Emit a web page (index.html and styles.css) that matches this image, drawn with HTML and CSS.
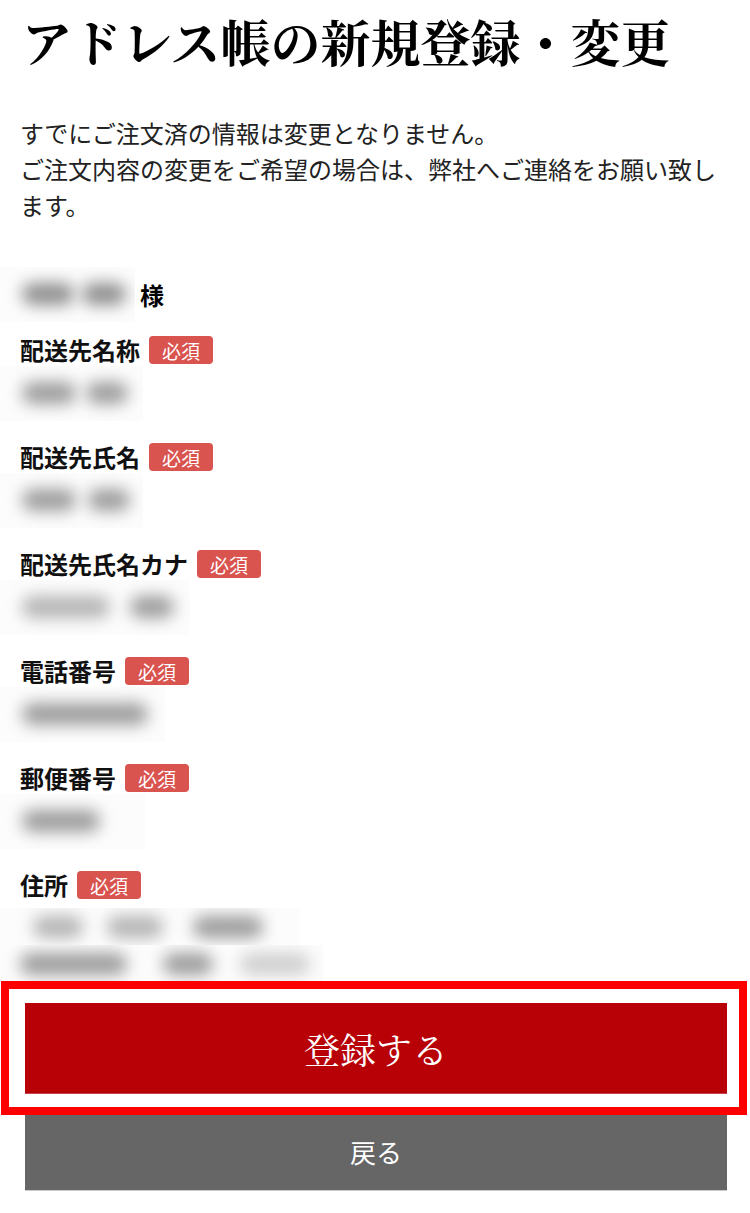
FILE: index.html
```html
<!DOCTYPE html>
<html lang="ja">
<head>
<meta charset="utf-8">
<title>アドレス帳の新規登録・変更</title>
<link rel="stylesheet" href="styles.css">
</head>
<body>
<div class="page">
  <h1 class="title">アドレス帳の新規登録・変更</h1>
  <p class="notice">すでにご注文済の情報は変更となりません。<br>ご注文内容の変更をご希望の場合は、弊社へご連絡をお願い致します。</p>

  <div class="customer">
    <div class="masked w135">
      <span class="blob dark" style="left:22px;width:52px"></span>
      <span class="blob dark" style="left:82px;width:44px"></span>
    </div>
    <span class="sama">様</span>
  </div>

  <div class="fields">
    <div class="field">
      <div class="label">配送先名称<span class="badge">必須</span></div>
      <div class="value"><div class="masked w143">
        <span class="blob" style="left:22px;width:54px"></span>
        <span class="blob" style="left:86px;width:42px"></span>
      </div></div>
    </div>
    <div class="field">
      <div class="label">配送先氏名<span class="badge">必須</span></div>
      <div class="value"><div class="masked w143">
        <span class="blob" style="left:22px;width:54px"></span>
        <span class="blob" style="left:88px;width:42px"></span>
      </div></div>
    </div>
    <div class="field">
      <div class="label">配送先氏名カナ<span class="badge">必須</span></div>
      <div class="value"><div class="masked w190">
        <span class="blob light" style="left:22px;width:88px"></span>
        <span class="blob" style="left:130px;width:44px"></span>
      </div></div>
    </div>
    <div class="field">
      <div class="label">電話番号<span class="badge">必須</span></div>
      <div class="value"><div class="masked w165">
        <span class="blob" style="left:22px;width:126px"></span>
      </div></div>
    </div>
    <div class="field">
      <div class="label">郵便番号<span class="badge">必須</span></div>
      <div class="value"><div class="masked w145">
        <span class="blob" style="left:22px;width:78px"></span>
      </div></div>
    </div>
    <div class="field last">
      <div class="label">住所<span class="badge">必須</span></div>
      <div class="value address">
        <div class="masked w300 line">
          <span class="blob light" style="left:33px;width:50px"></span>
          <span class="blob light" style="left:107px;width:56px"></span>
          <span class="blob" style="left:193px;width:70px"></span>
        </div>
        <div class="masked w323 line">
          <span class="blob" style="left:20px;width:107px"></span>
          <span class="blob" style="left:163px;width:50px"></span>
          <span class="blob faint" style="left:240px;width:70px"></span>
        </div>
      </div>
    </div>
  </div>

  <div class="actions">
    <div class="submit-wrap">
      <button class="btn btn-submit" type="button">登録する</button>
      <span class="highlight"></span>
    </div>
    <button class="btn btn-back" type="button">戻る</button>
  </div>
</div>
</body>
</html>
```

FILE: styles.css
```css
html, body {
  margin: 0;
  padding: 0;
  background: #ffffff;
}

body {
  font-family: "Noto Sans CJK JP", "Noto Sans", sans-serif;
  color: #111;
}

.page {
  padding: 0 20px 0 20px;
}

.title {
  margin: 0;
  padding-top: 15px;
  padding-left: 2px;
  font-family: "Noto Serif CJK JP", "Noto Sans CJK JP", serif;
  font-size: 50px;
  line-height: 50px;
  font-weight: 700;
  color: #000;
  white-space: nowrap;
}

.notice {
  margin: 50px 0 0 0;
  font-size: 24px;
  line-height: 36px;
  color: #222;
}

.customer {
  margin-top: 44px;
  margin-left: -20px;
  height: 55px;
  display: flex;
  align-items: center;
}

.sama {
  margin-left: 5px;
  font-size: 24px;
  font-weight: 700;
  color: #000;
}

.masked {
  position: relative;
  height: 55px;
  background: #fcfcfc;
  overflow: hidden;
  flex: none;
}

.w135 { width: 135px; }
.w143 { width: 143px; }
.w145 { width: 145px; }
.w165 { width: 165px; }
.w190 { width: 190px; }
.w300 { width: 300px; }
.w323 { width: 323px; }

.blob {
  position: absolute;
  top: 16px;
  height: 22px;
  border-radius: 11px;
  background: #9c9c9c;
  filter: blur(8px);
}

.blob.dark { background: #8e8e8e; }
.blob.light { background: #b4b4b4; }
.blob.faint { background: #cfcfcf; }

.fields {
  margin-top: 14px;
}

.field {
  height: 86px;
  margin-bottom: 21px;
}

.field.last {
  height: auto;
  margin-bottom: 0;
}

.label {
  height: 28px;
  display: flex;
  align-items: center;
  font-size: 24px;
  font-weight: 700;
  color: #111;
  line-height: 28px;
}

.badge {
  margin-left: 9px;
  height: 28px;
  padding: 0 13px;
  box-sizing: border-box;
  display: inline-flex;
  align-items: center;
  background: #d9534f;
  border-radius: 4px;
  color: #fff;
  font-size: 19px;
  font-weight: 400;
  line-height: 1;
}

.value {
  height: 58px;
  margin-left: -20px;
  padding-top: 2px;
  box-sizing: border-box;
}

.value.address {
  height: auto;
  padding-top: 9px;
  display: flex;
  flex-direction: column;
}

.masked.line {
  height: 37px;
}

.masked.line .blob {
  top: 8px;
}

.actions {
  margin-top: 21px;
  margin-left: 5px;
  margin-right: 3px;
  display: flex;
  flex-direction: column;
}

.submit-wrap {
  position: relative;
}

.btn {
  display: block;
  width: 100%;
  border: none;
  margin: 0;
  padding: 0;
  color: #fff;
  cursor: pointer;
}

.btn-submit {
  height: 91px;
  background: #b80007;
  border-bottom: 1px solid #c8404a;
  font-family: "Noto Serif CJK JP", "Liberation Serif", "Noto Sans CJK JP", serif;
  font-size: 36px;
  font-weight: 400;
  letter-spacing: 0;
}

.btn-back {
  margin-top: 19px;
  height: 78px;
  background: #666666;
  border-bottom: 1px solid #c9c9c9;
  font-family: "Noto Sans CJK JP", sans-serif;
  font-size: 26px;
  font-weight: 400;
}

.highlight {
  position: absolute;
  left: -24px;
  top: -22px;
  right: -20px;
  bottom: -21px;
  border: 8px solid #ff0000;
  pointer-events: none;
}
```
